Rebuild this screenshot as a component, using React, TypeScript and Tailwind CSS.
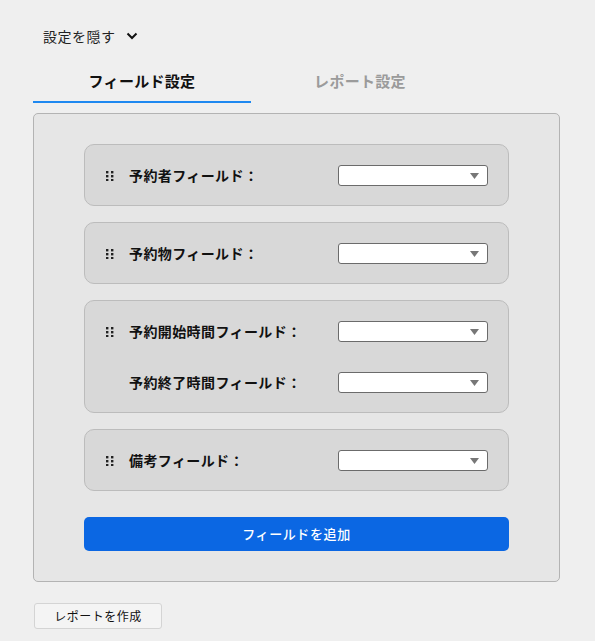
import React from "react";

const font = { fontFamily: '"Noto Sans CJK JP", "Noto Sans", sans-serif' };

function Handle() {
  return (
    <svg width="8" height="10" viewBox="0 0 8 10" className="shrink-0">
      {[0, 1, 2].map((r) =>
        [0, 1].map((c) => (
          <rect key={`${r}-${c}`} x={c * 5} y={r * 4} width="2.4" height="2.4" fill="#222" />
        ))
      )}
    </svg>
  );
}

function Select() {
  return (
    <div className="ml-auto w-[150px] h-[21px] bg-white border border-[#6b6b6b] rounded-[3px] flex items-center justify-end pr-[8px] shrink-0">
      <svg width="9" height="6" viewBox="0 0 9 6">
        <path d="M0 0 L9 0 L4.5 6 Z" fill="#777" />
      </svg>
    </div>
  );
}

function Row({ label, handle = true }: { label: string; handle?: boolean }) {
  return (
    <div className="flex items-center h-[21px]">
      <div className="w-[23px] flex items-center">{handle ? <Handle /> : null}</div>
      <span className="text-[14px] font-bold text-[#111] tracking-[0.4px]">{label}</span>
      <Select />
    </div>
  );
}

function Card({ children }: { children: React.ReactNode }) {
  return (
    <div className="bg-[#d8d8d8] border border-[#bcbcbc] rounded-[10px] pt-[20px] pb-[19px] pl-[21px] pr-[20px] flex flex-col gap-[30px]">
      {children}
    </div>
  );
}

export default function App() {
  return (
    <div className="min-h-[641px] w-full bg-[#efefef] text-[#111]" style={font}>
      <div className="pl-[33px] pt-[24px]">
        <div className="flex items-center h-[24px] pl-[10px] gap-[10px]">
          <span className="text-[14px] tracking-[0.5px] text-[#222]">設定を隠す</span>
          <svg width="12" height="8" viewBox="0 0 12 8">
            <path d="M1.5 1.5 L6 6 L10.5 1.5" fill="none" stroke="#111" strokeWidth="2" />
          </svg>
        </div>
        <div className="flex w-[436px] mt-[13px]">
          <div className="flex-1 h-[42px] flex items-center justify-center border-b-2 border-[#1e88f0]">
            <span className="text-[15px] font-bold tracking-[0.3px] text-[#111]">フィールド設定</span>
          </div>
          <div className="flex-1 h-[42px] flex items-center justify-center border-b-2 border-transparent">
            <span className="text-[15px] font-bold tracking-[0.3px] text-[#9b9b9b]">レポート設定</span>
          </div>
        </div>
        <div className="mt-[10px] w-[527px] bg-[#e6e6e6] border border-[#b3b3b3] rounded-[5px] px-[50px] pt-[30px] pb-[30px]">
          <div className="flex flex-col gap-[16px]">
            <Card>
              <Row label="予約者フィールド：" />
            </Card>
            <Card>
              <Row label="予約物フィールド：" />
            </Card>
            <Card>
              <Row label="予約開始時間フィールド：" />
              <Row label="予約終了時間フィールド：" handle={false} />
            </Card>
            <Card>
              <Row label="備考フィールド：" />
            </Card>
          </div>
          <button className="mt-[26px] w-full h-[34px] bg-[#0b67e3] rounded-[5px] text-white text-[13px] font-medium tracking-[0.6px] flex items-center justify-center">
            フィールドを追加
          </button>
        </div>
        <button className="mt-[21px] ml-[1px] w-[128px] h-[26px] bg-[#f4f4f4] border border-[#d4d4d4] rounded-[3px] text-[12px] tracking-[0.5px] text-[#111] flex items-center justify-center">
          レポートを作成
        </button>
      </div>
    </div>
  );
}
